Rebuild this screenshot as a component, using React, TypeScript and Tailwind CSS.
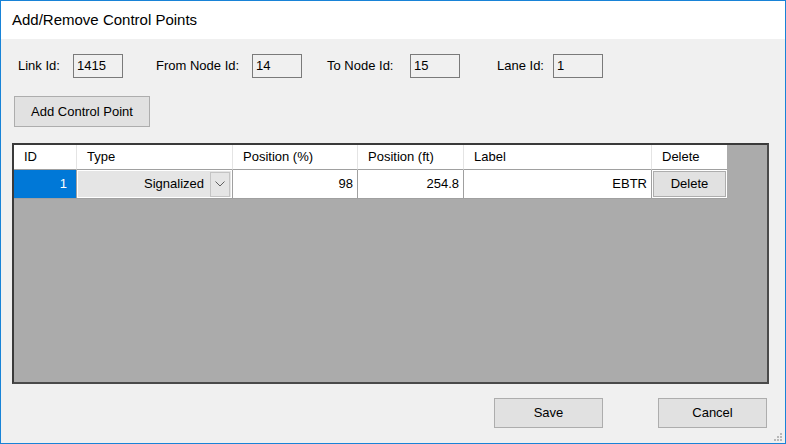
import React from 'react';

const font = { fontFamily: '"Liberation Sans", Arial, sans-serif' };

const Field: React.FC<{ label: string; value: string; labelW: string; gap?: string }> = ({
  label,
  value,
  labelW,
  gap
}) => (
  <div className={`flex items-center ${gap ?? ''}`}>
    <span className={`${labelW} text-[13px] text-black`}>{label}</span>
    <div className="w-[50px] h-[24px] border border-[#7a7a7a] bg-[#f0f0f0] pl-[3px] flex items-center text-[13px] text-black">
      {value}
    </div>
  </div>
);

const WinButton: React.FC<{ children: React.ReactNode; className?: string }> = ({ children, className }) => (
  <button
    className={`border border-[#adadad] bg-[#e1e1e1] text-[13px] text-black flex items-center justify-center ${className ?? ''}`}
  >
    {children}
  </button>
);

const columns = [
  { name: 'ID', w: 'w-[63px]' },
  { name: 'Type', w: 'w-[156px]' },
  { name: 'Position (%)', w: 'w-[125px]' },
  { name: 'Position (ft)', w: 'w-[106px]' },
  { name: 'Label', w: 'w-[188px]' },
  { name: 'Delete', w: 'w-[75px]' }
];

export default function App() {
  return (
    <div style={font} className="w-[786px] h-[444px] border border-[#1883d7] bg-[#f0f0f0] flex flex-col overflow-hidden">
      {/* title bar */}
      <div className="h-[38px] bg-white flex items-center pl-[11px] text-[15px] text-black shrink-0">
        Add/Remove Control Points
      </div>

      <div className="flex-1 flex flex-col relative">
        {/* id fields */}
        <div className="flex items-center mt-[15px] pl-[17px]">
          <Field label="Link Id:" value="1415" labelW="w-[55px]" />
          <Field label="From Node Id:" value="14" labelW="w-[96px]" gap="ml-[33px]" />
          <Field label="To Node Id:" value="15" labelW="w-[83px]" gap="ml-[25px]" />
          <Field label="Lane Id:" value="1" labelW="w-[56px]" gap="ml-[37px]" />
        </div>

        <div className="pl-[13px] mt-[18px]">
          <WinButton className="w-[136px] h-[31px]">Add Control Point</WinButton>
        </div>

        {/* data grid */}
        <div className="ml-[11px] mt-[16px] w-[757px] h-[241px] border-2 border-t-[#3a3a3a] border-l-[#3a3a3a] border-r-[#4a4a4a] border-b-[#4a4a4a] bg-[#ababab]">
          <div className="flex h-[25px] bg-white w-[713px]">
            {columns.map((c, i) => (
              <div
                key={c.name}
                className={`${c.w} h-full flex items-center pl-[10px] text-[13px] text-black border-b border-[#a0a0a0] ${
                  i < columns.length - 1 ? 'border-r border-r-[#e4e4e4]' : ''
                }`}
              >
                {c.name}
              </div>
            ))}
          </div>
          <div className="flex h-[29px] w-[713px] text-[13px] text-black border-b border-[#a0a0a0]">
            <div className="w-[63px] h-full bg-[#0078d7] text-white flex items-center justify-end pr-[9px] border-r border-[#a0a0a0]">
              1
            </div>
            <div className="w-[156px] h-full bg-white border-r border-[#a0a0a0] p-px">
              <div className="h-full bg-[#e5e5e5] flex items-center justify-end">
                <span className="pr-[6px]">Signalized</span>
                <div className="w-[20px] h-[25px] mr-px border border-[#c4c4c4] bg-[#e5e5e5] flex items-center justify-center">
                  <svg width="10" height="6" viewBox="0 0 10 6">
                    <path d="M0.5 0.5 L5 5 L9.5 0.5" fill="none" stroke="#606060" strokeWidth="1" />
                  </svg>
                </div>
              </div>
            </div>
            <div className="w-[125px] h-full bg-white flex items-center justify-end pr-[4px] border-r border-[#a0a0a0]">
              98
            </div>
            <div className="w-[106px] h-full bg-white flex items-center justify-end pr-[4px] border-r border-[#a0a0a0]">
              254.8
            </div>
            <div className="w-[188px] h-full bg-white flex items-center justify-end pr-[4px] border-r border-[#a0a0a0]">
              EBTR
            </div>
            <div className="w-[75px] h-full bg-white p-px">
              <WinButton className="w-full h-full">Delete</WinButton>
            </div>
          </div>
        </div>

        {/* footer buttons */}
        <div className="flex justify-end mt-[14px] pr-[18px] gap-[55px]">
          <WinButton className="w-[109px] h-[30px]">Save</WinButton>
          <WinButton className="w-[109px] h-[30px]">Cancel</WinButton>
        </div>

        {/* size grip */}
        <svg className="absolute right-[2px] bottom-[1px]" width="10" height="10" viewBox="0 0 10 10">
          {[
            [8, 2],
            [8, 5],
            [5, 5],
            [8, 8],
            [5, 8],
            [2, 8]
          ].map(([x, y]) => (
            <rect key={`${x}-${y}`} x={x - 1} y={y - 1} width="2" height="2" fill="#b8b8b8" />
          ))}
        </svg>
      </div>
    </div>
  );
}
